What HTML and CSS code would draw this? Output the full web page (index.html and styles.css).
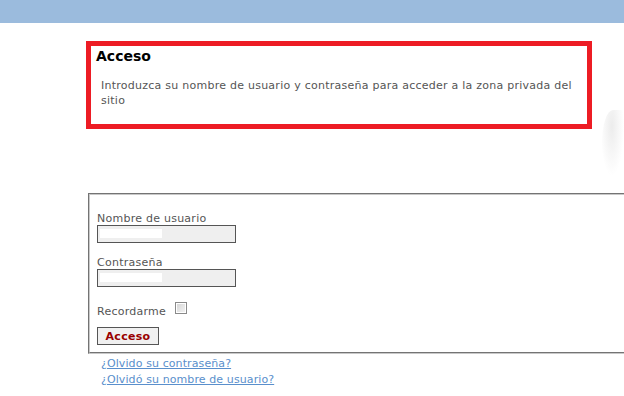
FILE: index.html
```html
<!DOCTYPE html>
<html lang="es">
<head>
  <meta charset="UTF-8" />
  <title>Acceso</title>
  <link rel="stylesheet" href="styles.css">
</head>
<body>
  <div class="top-bar"></div>
  <div class="lock-shadow"></div>

  <div class="main">
    <div class="notice">
      <h2>Acceso</h2>
      <p>Introduzca su nombre de usuario y contraseña para acceder a la zona privada del sitio</p>
    </div>

    <form class="login-form">
      <fieldset>
        <label for="username">Nombre de usuario</label>
        <input type="text" id="username" class="field">

        <label for="password">Contraseña</label>
        <input type="password" id="password" class="field">

        <div class="remember">
          <label for="remember">Recordarme</label>
          <input type="checkbox" id="remember">
        </div>

        <button type="button" class="submit-btn">Acceso</button>
      </fieldset>
    </form>

    <ul class="links">
      <li><a href="#">¿Olvido su contraseña?</a></li>
      <li><a href="#">¿Olvidó su nombre de usuario?</a></li>
    </ul>
  </div>
</body>
</html>
```

FILE: styles.css
```css
html, body {
  margin: 0;
  overflow: hidden;
  background-color: white;
  font-family: "DejaVu Sans", Verdana, sans-serif;
  font-size: 11px;
  color: #555;
}

.top-bar {
  height: 23px;
  background-color: #9bbbdd;
}

/* faint decoration peeking in at the right edge */
.lock-shadow {
  position: absolute;
  top: 110px;
  right: 0;
  width: 22px;
  height: 66px;
  border-radius: 50% 0 0 50%;
  background: radial-gradient(ellipse at 45% 25%, #ececec 0%, #f7f7f7 40%, #fff 70%);
}

.main {
  padding-left: 86px;
}

.notice {
  margin-top: 18px;
  width: 496px;
  height: 78px;
  border: 5px solid #ed1c24;
  background-color: white;
}

.notice h2 {
  margin: 0;
  padding: 2px 0 0 5px;
  font-size: 14px;
  font-weight: bold;
  color: black;
}

.notice p {
  margin: 14px 10px 0 10px;
  line-height: 15px;
  letter-spacing: 0.25px;
  color: #555;
}

.login-form {
  margin: 64px 0 0 2px;
}

.login-form fieldset {
  box-sizing: border-box;
  width: 536px;
  margin: 0;
  padding: 17px 7px 7px 7px;
  border: 2px groove #c8c8c8;
  border-right: none;
}

.login-form label {
  display: block;
  line-height: 13px;
  letter-spacing: 0.25px;
}

.field {
  display: block;
  box-sizing: border-box;
  width: 139px;
  height: 18px;
  margin: 0 0 13px 0;
  padding: 0 3px;
  border: 1px solid #555;
  border-radius: 0;
  background: #efefef linear-gradient(#fff, #fff) no-repeat 2px 3px / 62px 9px;
  font-family: inherit;
  font-size: 11px;
}

.remember {
  display: flex;
  align-items: flex-start;
  gap: 9px;
  margin-top: 18px;
  height: 13px;
}

.remember label {
  display: inline;
}

.remember input {
  appearance: none;
  box-sizing: border-box;
  width: 12px;
  height: 12px;
  margin: -3px 0 0 0;
  border: 1px solid #8a8a8a;
  background: linear-gradient(135deg, #d4d4d4, #f4f4f4);
  box-shadow: inset 0 0 0 1px #fff;
}

.submit-btn {
  display: block;
  width: 62px;
  height: 18px;
  margin-top: 9px;
  padding: 0;
  border: 1px solid #555;
  border-radius: 0;
  background-color: #f0f0f0;
  color: #990000;
  font-family: inherit;
  font-size: 11px;
  font-weight: bold;
  letter-spacing: 0.3px;
}

.links {
  list-style: none;
  margin: 2px 0 0 0;
  padding: 0 0 0 15px;
  line-height: 16px;
}

.links a {
  color: #5a8fcc;
  text-decoration: underline;
  letter-spacing: 0.1px;
}
```
